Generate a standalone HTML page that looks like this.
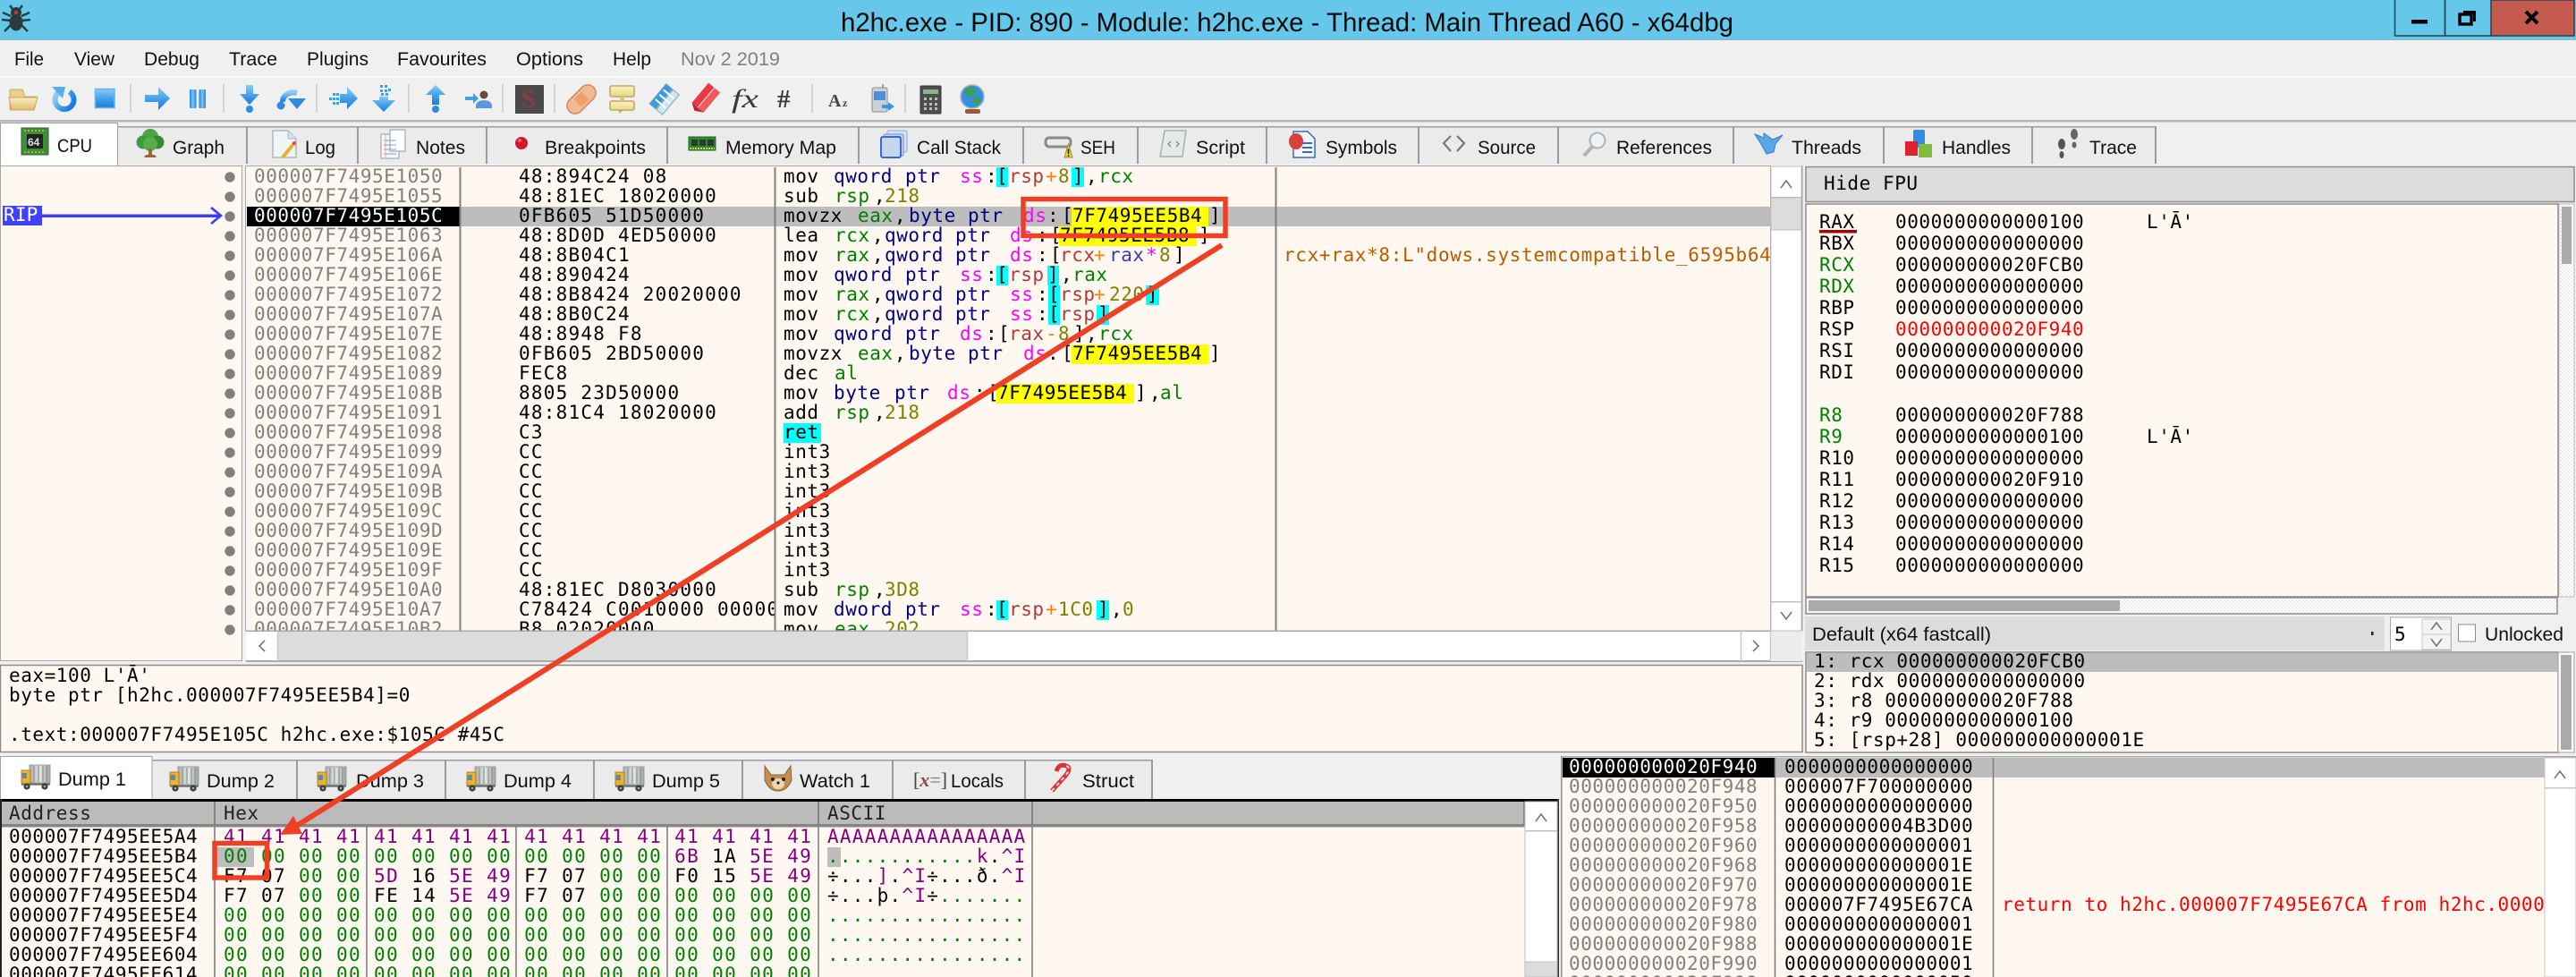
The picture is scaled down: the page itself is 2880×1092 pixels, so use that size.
<!DOCTYPE html>
<html><head><meta charset="utf-8"><title>h2hc.exe - x64dbg</title>
<style>
html,body{margin:0;padding:0;width:2880px;height:1092px;overflow:hidden;background:#f0f0f0}
svg{display:block}
text{white-space:pre}
.s{font-family:"Liberation Sans",sans-serif;font-size:21.5px;fill:#111}
.m{font-family:"DejaVu Sans Mono","Liberation Mono",monospace;font-size:21px;letter-spacing:.56px;fill:#000}
.d{letter-spacing:1.23px}.h{letter-spacing:1.36px}.c{letter-spacing:.9px}
.g{fill:#808080}.w{fill:#fff}.b{fill:#000080}.p{fill:#ff00ff}.r{fill:#008000}.o{fill:#808000}
.q{fill:#ad3b3b}.a{fill:#ff8000}.u{fill:#3b3bad}.v{fill:#800080}.k{fill:#000}.e{fill:#ff0000}.n{fill:#b85c00}
</style></head><body>
<svg xmlns="http://www.w3.org/2000/svg" width="2880" height="1092" viewBox="0 0 2880 1092">
<defs>
<linearGradient id="bl" x1="0" y1="0" x2="0" y2="1"><stop offset="0" stop-color="#8ccbf5"/><stop offset=".55" stop-color="#3f9fe8"/><stop offset="1" stop-color="#1f7bd6"/></linearGradient>
<linearGradient id="blh" x1="0" y1="0" x2="1" y2="0"><stop offset="0" stop-color="#2585de"/><stop offset=".5" stop-color="#7cc4f4"/><stop offset="1" stop-color="#2585de"/></linearGradient>
<linearGradient id="fo" x1="0" y1="0" x2="0" y2="1"><stop offset="0" stop-color="#f9ecbf"/><stop offset="1" stop-color="#dcbc72"/></linearGradient>
<linearGradient id="ye" x1="0" y1="0" x2="0" y2="1"><stop offset="0" stop-color="#faf3c4"/><stop offset="1" stop-color="#e8d984"/></linearGradient>
<linearGradient id="gy" x1="0" y1="0" x2="1" y2="0"><stop offset="0" stop-color="#a9adab"/><stop offset=".5" stop-color="#e2e5e3"/><stop offset="1" stop-color="#9da19f"/></linearGradient>
<g id="truck"><rect x="9" y="0" width="23" height="20" fill="url(#gy)" stroke="#9a9d9b"/><path d="M14 1v18M19 1v18M24 1v18M28 1v18" stroke="#8f938f" stroke-width="1.2"/><rect x="0" y="6" width="10" height="15" fill="#eab22e" stroke="#b08416"/><rect x="0.8" y="9" width="5" height="6" fill="#5f86b0"/><rect x="0" y="20.5" width="32" height="2.2" fill="#6e6e6e"/><circle cx="6" cy="24" r="3.6" fill="#3c3c3c"/><circle cx="6" cy="24" r="1.3" fill="#aaa"/><circle cx="26" cy="24" r="3.6" fill="#3c3c3c"/><circle cx="26" cy="24" r="1.3" fill="#aaa"/></g>
<path id="chev" d="M-6 4L0 -4L6 4" fill="none" stroke="#777" stroke-width="1.6"/>
<path id="chevd" d="M-6 -4L0 4L6 -4" fill="none" stroke="#777" stroke-width="1.6"/>
<pattern id="chk" width="4" height="4" patternUnits="userSpaceOnUse"><rect width="4" height="4" fill="#fff"/><rect width="2" height="2" fill="#ececec"/><rect x="2" y="2" width="2" height="2" fill="#ececec"/></pattern>
</defs>

<!-- chrome -->
<rect width="2880" height="1092" fill="#f0f0f0"/>
<rect width="2880" height="44" fill="#65c8ea"/>
<rect y="44" width="2880" height="1" fill="#9cb4be"/>
<rect y="85" width="2880" height="1.5" fill="#fff"/>
<rect y="134" width="2880" height="2.5" fill="#b4b4b4"/>

<!-- spider logo -->
<g fill="#2b3a3f" stroke="#2b3a3f">
<ellipse cx="18" cy="25" rx="7" ry="9"/><ellipse cx="18" cy="14" rx="5.5" ry="5.5"/>
<path d="M12 18L3 14M12 23L2 22M12 28L5 35M24 18L33 14M24 23L34 22M24 28L31 35M14 10L11 6M22 10L25 6" fill="none" stroke-width="2.4"/>
</g><circle cx="18" cy="14" r="2.2" fill="#c0392b"/>

<text x="940" y="35" font-family="Liberation Sans,sans-serif" font-size="29.5" fill="#0a0a0a" textLength="998" lengthAdjust="spacingAndGlyphs">h2hc.exe - PID: 890 - Module: h2hc.exe - Thread: Main Thread A60 - x64dbg</text>

<!-- window buttons -->
<rect x="2677.5" y="-2" width="56" height="42" fill="none" stroke="#23424f" stroke-width="1.5"/>
<rect x="2733.5" y="-2" width="52" height="42" fill="none" stroke="#23424f" stroke-width="1.5"/>
<rect x="2785" y="0" width="93" height="40" fill="#c45a50" stroke="#23424f" stroke-width="1.5"/>
<rect x="2696" y="22" width="18" height="4.5" fill="#000"/>
<path d="M2754 12h14v12h-3v-9h-11z" fill="#000"/><rect x="2750" y="16" width="13" height="11" fill="none" stroke="#000" stroke-width="3.4"/>
<path d="M2824 13L2837 26M2837 13L2824 26" stroke="#000" stroke-width="4" fill="none"/>

<!-- menu -->
<text class="s" x="16" y="73" textLength="33" lengthAdjust="spacingAndGlyphs">File</text>
<text class="s" x="83" y="73" textLength="45" lengthAdjust="spacingAndGlyphs">View</text>
<text class="s" x="161" y="73" textLength="62" lengthAdjust="spacingAndGlyphs">Debug</text>
<text class="s" x="256" y="73" textLength="54" lengthAdjust="spacingAndGlyphs">Trace</text>
<text class="s" x="343" y="73" textLength="69" lengthAdjust="spacingAndGlyphs">Plugins</text>
<text class="s" x="444" y="73" textLength="100" lengthAdjust="spacingAndGlyphs">Favourites</text>
<text class="s" x="577" y="73" textLength="75" lengthAdjust="spacingAndGlyphs">Options</text>
<text class="s" x="685" y="73" textLength="43" lengthAdjust="spacingAndGlyphs">Help</text>
<text class="s" x="761" y="73" textLength="111" lengthAdjust="spacingAndGlyphs" style="fill:#808080">Nov 2 2019</text>

<!-- toolbar -->
<path d="M146 94v32M250 94v32M354 94v32M457 94v32M562 94v32M620 94v32M908 94v32M1012 94v32" stroke="#c8c8c8" stroke-width="1.5"/>
<!-- folder -->
<path d="M11 105V122Q11 123 13 123H37L41 108H28L25 100H13Q11 100 11 102Z" fill="#e9cf8e" stroke="#c9a659" stroke-width="1"/>
<path d="M10 109H42L38 123H13Z" fill="url(#fo)" stroke="#c9a659" stroke-width="1"/>
<!-- refresh -->
<circle cx="72" cy="111.5" r="10.5" fill="none" stroke="url(#bl)" stroke-width="6" stroke-dasharray="52 14" transform="rotate(-58 72 111.5)"/><path d="M58 97H73L70 110Z" fill="#58aeea"/>
<!-- stop -->
<rect x="106.5" y="99.5" width="21.5" height="21" fill="url(#bl)" stroke="#66b4ec" stroke-width="1.5"/>
<!-- run -->
<path d="M162 106H177V97L190 110L177 123V114H162Z" fill="url(#bl)"/>
<!-- pause -->
<rect x="212" y="100" width="7.5" height="21" rx="1" fill="url(#blh)"/><rect x="222.5" y="100" width="7.5" height="21" rx="1" fill="url(#blh)"/>
<!-- step in -->
<path d="M275 95H283V105H290L279 117L268 105H275Z" fill="url(#bl)"/><circle cx="279" cy="122" r="4" fill="#2f8be0"/>
<!-- step over -->
<path d="M316 114A12 10 0 0 1 332 104" fill="none" stroke="url(#bl)" stroke-width="6"/><path d="M322 110H342L332 122Z" fill="#2f8be0"/><circle cx="314" cy="118" r="4.5" fill="#2f8be0"/>
<!-- animate into -->
<path d="M380 105H388V97L400 110L388 122V115H380Z" fill="url(#bl)"/><path d="M368 109h3v3h-3zM372 104h3v3h-3zM372 109h3v3h-3zM372 114h3v3h-3zM376 104h3v3h-3zM376 109h3v3h-3zM376 114h3v3h-3z" fill="#3f9fe8"/>
<!-- animate over -->
<path d="M424 108H434V112H442L429 125L416 112H424Z" fill="url(#bl)"/><path d="M425 95h3v3h-3zM430 95h3v3h-3zM425 100h3v3h-3zM430 100h3v3h-3zM434 99h3v3h-3zM426 104h3v3h-3zM431 104h3v3h-3z" fill="#3f9fe8"/>
<!-- run to user -->
<path d="M483 117H491V106H498L487 95L476 106H483Z" fill="url(#bl)"/><circle cx="487" cy="122" r="4" fill="#2f8be0"/>
<path d="M520 108H529V104L535 110L529 116V112H520Z" fill="#3f9fe8"/><circle cx="541" cy="106" r="4.5" fill="#6a4a36"/><path d="M532 121V117Q534 112 541 112Q548 112 550 117V121Z" fill="#5a98d8"/>
<!-- S -->
<rect x="576" y="95" width="32" height="32" fill="#4a4a4a"/><text x="583" y="120" font-family="Liberation Serif,serif" font-weight="700" font-size="28" fill="#8e3a44">S</text>
<!-- bandaid -->
<g transform="rotate(45 650 111)"><rect x="641" y="92" width="18" height="38" rx="9" fill="#f2ba92" stroke="#c98a60" stroke-width="1.5"/><rect x="644" y="105" width="12" height="12" fill="#eda26e"/></g>
<!-- comment -->
<rect x="682" y="96" width="27" height="12" rx="2" fill="url(#ye)" stroke="#c4a45c" stroke-width="1.5"/><rect x="682" y="113" width="27" height="10" rx="2" fill="url(#ye)" stroke="#c4a45c" stroke-width="1.5"/><rect x="693" y="108" width="5" height="5" fill="#dcc880"/><path d="M692 123v4l5-4z" fill="#c4a45c"/>
<!-- labels -->
<g transform="rotate(40 742 111)"><rect x="733" y="96" width="9" height="29" fill="#3a9ae4" stroke="#7fa6bc"/><rect x="743" y="96" width="9" height="29" fill="#cfe6f5" stroke="#7fa6bc"/><path d="M735 103h15M735 110h15M735 117h15" stroke="#fff" stroke-width="2"/></g>
<!-- bookmarks -->
<g transform="rotate(40 788 110)"><rect x="780" y="94" width="8" height="29" fill="#e93a44"/><rect x="789" y="94" width="8" height="29" fill="#f25a60"/><path d="M780 123l8 5 9-5z" fill="#c0262f"/></g>
<text x="818" y="120" font-family="Liberation Serif,serif" font-style="italic" font-size="30" fill="#3a3a3a" textLength="30" lengthAdjust="spacingAndGlyphs">fx</text>
<text x="869" y="120" font-family="Liberation Serif,serif" font-weight="700" font-size="29" fill="#3a3a3a">#</text>
<text x="926" y="119" font-family="Liberation Serif,serif" font-weight="700" font-size="20" fill="#444">A</text><text x="942" y="119" font-family="Liberation Serif,serif" font-weight="700" font-size="12" fill="#444">z</text>
<!-- phone -->
<rect x="975" y="98" width="17" height="27" rx="2" fill="#ccd1d4" stroke="#8a8f92"/><path d="M987 98v-4" stroke="#888" stroke-width="1.5"/><rect x="977" y="102" width="13" height="10" fill="#4a8fd8"/><path d="M986 117h7v-3l7 5-7 5v-3h-7z" fill="#3a92e2"/>
<!-- calc -->
<rect x="1029" y="96" width="23" height="31" rx="1" fill="#4d4f4d" stroke="#333"/><rect x="1032" y="100" width="17" height="5" fill="#8fb08f"/><path d="M1033 109h3v3h-3zM1039 109h3v3h-3zM1045 109h3v3h-3zM1033 115h3v3h-3zM1039 115h3v3h-3zM1045 115h3v3h-3zM1033 120h3v3h-3zM1039 120h3v3h-3zM1045 120h3v3h-3z" fill="#bbb"/>
<!-- globe -->
<circle cx="1087" cy="108" r="13" fill="#3a8fdc" stroke="#9fb7c6" stroke-width="1.5"/><path d="M1080 99l7-2 4 5-3 5-6 1-3-4zM1088 110l7-1 1 5-5 5-2-3z" fill="#3ea04a"/><rect x="1079" y="122" width="17" height="5" rx="2" fill="#9a5a3a"/>

<!-- upper tabs -->
<rect x="132" y="141" width="2278" height="42" fill="#ebebeb"/>
<rect x="132" y="141" width="2278" height="1.6" fill="#a0a0a8"/>
<path d="M276 141v42M400 141v42M544 141v42M746 141v42M960 141v42M1144 141v42M1272 141v42M1416 141v42M1586 141v42M1742 141v42M1938 141v42M2106 141v42M2272 141v42M2410 141v42" stroke="#9a9aa2" stroke-width="2"/>
<rect x="0.5" y="137.5" width="131" height="50" fill="#fff" stroke="#a0a0a8"/>
<text class="s" x="64" y="170" textLength="39" lengthAdjust="spacingAndGlyphs">CPU</text>
<text class="s" x="193" y="172" textLength="58" lengthAdjust="spacingAndGlyphs">Graph</text>
<text class="s" x="341" y="172" textLength="34" lengthAdjust="spacingAndGlyphs">Log</text>
<text class="s" x="465" y="172" textLength="55" lengthAdjust="spacingAndGlyphs">Notes</text>
<text class="s" x="609" y="172" textLength="113" lengthAdjust="spacingAndGlyphs">Breakpoints</text>
<text class="s" x="811" y="172" textLength="124" lengthAdjust="spacingAndGlyphs">Memory Map</text>
<text class="s" x="1025" y="172" textLength="94" lengthAdjust="spacingAndGlyphs">Call Stack</text>
<text class="s" x="1208" y="172" textLength="39" lengthAdjust="spacingAndGlyphs">SEH</text>
<text class="s" x="1337" y="172" textLength="55" lengthAdjust="spacingAndGlyphs">Script</text>
<text class="s" x="1482" y="172" textLength="80" lengthAdjust="spacingAndGlyphs">Symbols</text>
<text class="s" x="1652" y="172" textLength="65" lengthAdjust="spacingAndGlyphs">Source</text>
<text class="s" x="1807" y="172" textLength="107" lengthAdjust="spacingAndGlyphs">References</text>
<text class="s" x="2003" y="172" textLength="78" lengthAdjust="spacingAndGlyphs">Threads</text>
<text class="s" x="2171" y="172" textLength="77" lengthAdjust="spacingAndGlyphs">Handles</text>
<text class="s" x="2336" y="172" textLength="53" lengthAdjust="spacingAndGlyphs">Trace</text>
<!-- tab icons -->
<rect x="24" y="143" width="30" height="30" fill="#3f8f3a" stroke="#2c6a2a"/><path d="M27 146h24M27 170h24" stroke="#b8a84a" stroke-width="2" stroke-dasharray="2 2"/><rect x="30" y="150" width="18" height="16" fill="#222"/><text x="31" y="163" font-family="Liberation Sans,sans-serif" font-weight="700" font-size="12" fill="#ddd">64</text>
<circle cx="168" cy="153" r="9" fill="#4aa344"/><circle cx="160" cy="159" r="7.5" fill="#3f9a3c"/><circle cx="176" cy="159" r="7.5" fill="#368a34"/><circle cx="168" cy="161" r="8" fill="#56ae4a"/><path d="M166 166h4v7h3l2 3h-14l2-3h3z" fill="#9a6a3a"/>
<path d="M305 146H322L331 155V176H305Z" fill="#f0f6f6" stroke="#b0b8bc" stroke-width="1.5"/><path d="M322 146V155H331" fill="#dde" stroke="#b0b8bc"/><path d="M316 176L329 160" stroke="#e8b030" stroke-width="4"/><circle cx="329" cy="160" r="2" fill="#d05050"/>
<rect x="426" y="150" width="20" height="27" fill="#f6f8fb" stroke="#b0b8c0" stroke-width="1.5"/><rect x="436" y="145" width="17" height="24" fill="#fff" stroke="#b0b8c0" stroke-width="1.5"/><path d="M429 157h14M429 162h14M429 167h14M429 172h14" stroke="#7aa0d0"/><path d="M431 150v26" stroke="#e8a0a0"/>
<ellipse cx="583" cy="160" rx="7" ry="7" fill="#d01a2c"/><circle cx="581" cy="157" r="2" fill="#f06070"/>
<rect x="770" y="153" width="30" height="15" fill="#2f8a2f" stroke="#1f6a1f"/><rect x="773" y="156" width="7" height="7" fill="#2c3a2c"/><rect x="782" y="156" width="7" height="7" fill="#2c3a2c"/><rect x="791" y="156" width="7" height="7" fill="#2c3a2c"/><path d="M771 166h28" stroke="#d8c860" stroke-width="2" stroke-dasharray="2 1"/>
<rect x="992" y="146" width="22" height="24" rx="2" fill="#d4e2f4" stroke="#a6bcdc" stroke-width="1.5"/><rect x="988" y="150" width="22" height="24" rx="2" fill="#c4d8f0" stroke="#8ea8cc" stroke-width="1.5"/><rect x="985" y="153" width="22" height="23" rx="2" fill="#c6d6ea" stroke="#3a68d0" stroke-width="2"/>
<rect x="1169" y="154" width="28" height="10" rx="4" fill="none" stroke="#8a8a8a" stroke-width="3"/><path d="M1190 176L1199 176L1194.5 161Z" fill="#f0d030" stroke="#a09020"/><text x="1192.5" y="175" font-family="Liberation Sans,sans-serif" font-weight="700" font-size="12" fill="#222">!</text>
<path d="M1302 146H1326L1322 175H1297Z" fill="#e6eae6" stroke="#a8b0a8" stroke-width="1.5"/><path d="M1309 158l-3 3 3 3M1315 158l3 3-3 3" stroke="#667" fill="none"/>
<path d="M1446 147H1462L1470 155V176H1446Z" fill="#f2f5fa" stroke="#3a68c4" stroke-width="1.5"/><path d="M1456 160h11M1456 165h11M1456 170h11" stroke="#3a68c4" stroke-width="2"/><ellipse cx="1449" cy="158" rx="8" ry="9" fill="#d8423a"/>
<path d="M1622 152L1614 160L1622 169M1629 152L1637 160L1629 169" fill="none" stroke="#777" stroke-width="2.2"/>
<circle cx="1786" cy="157" r="8.5" fill="#eef2f4" stroke="#b0b4b8" stroke-width="2"/><path d="M1780 164L1771 174" stroke="#b0b4b8" stroke-width="4"/>
<path d="M1962 150l10 4v-5l10 7 11-5-8 10-2 9-8 2-5-9z" fill="#5aa6e6" stroke="#3a80c0"/>
<rect x="2139" y="145" width="13" height="20" rx="2" fill="#2e8fde"/><rect x="2130" y="158" width="14" height="16" fill="#e0202c"/><rect x="2145" y="161" width="15" height="15" fill="#82bc38"/>
<ellipse cx="2305" cy="161" rx="4" ry="6" fill="#555"/><ellipse cx="2305" cy="173" rx="2.5" ry="4" fill="#555"/><ellipse cx="2319" cy="150" rx="4" ry="6" fill="#666"/><ellipse cx="2319" cy="162" rx="2.5" ry="3.5" fill="#666"/>

<!-- disassembly frame -->
<rect x="0.5" y="185.5" width="270" height="553" fill="#fff8f0" stroke="#a8a8a8"/>
<rect x="274.5" y="185.5" width="1705" height="519.5" fill="#fff8f0" stroke="#a8a8a8"/>
<!-- gutter dots -->
<g fill="#808080">
<circle cx="257" cy="198" r="5.7"/><circle cx="257" cy="220" r="5.7"/><circle cx="257" cy="242" r="5.7"/><circle cx="257" cy="264" r="5.7"/><circle cx="257" cy="286" r="5.7"/><circle cx="257" cy="308" r="5.7"/><circle cx="257" cy="330" r="5.7"/><circle cx="257" cy="352" r="5.7"/><circle cx="257" cy="374" r="5.7"/><circle cx="257" cy="396" r="5.7"/><circle cx="257" cy="418" r="5.7"/><circle cx="257" cy="440" r="5.7"/><circle cx="257" cy="462" r="5.7"/><circle cx="257" cy="484" r="5.7"/><circle cx="257" cy="506" r="5.7"/><circle cx="257" cy="528" r="5.7"/><circle cx="257" cy="550" r="5.7"/><circle cx="257" cy="572" r="5.7"/><circle cx="257" cy="594" r="5.7"/><circle cx="257" cy="616" r="5.7"/><circle cx="257" cy="638" r="5.7"/><circle cx="257" cy="660" r="5.7"/><circle cx="257" cy="682" r="5.7"/><circle cx="257" cy="704" r="5.7"/>
</g>
<rect x="3" y="230" width="44" height="22" fill="#4040ff"/>
<text class="m w" x="4" y="247" style="letter-spacing:.2px;fill:#fff">RIP</text>
<rect x="47" y="239.5" width="198" height="3.5" fill="#3c3cff"/>
<path d="M236 232L247 241L236 250" fill="none" stroke="#3c3cff" stroke-width="2.6"/>

<!-- selected row -->
<rect x="276" y="231" width="1704" height="22" fill="#bdbdbd"/>
<rect x="276" y="231" width="238" height="22" fill="#000"/>
<!-- backgrounds -->
<g fill="#00ffff">
<rect x="1114" y="187" width="13" height="22"/><rect x="1198" y="187" width="14" height="22"/>
<rect x="1114" y="297" width="13" height="22"/><rect x="1171" y="297" width="13" height="22"/>
<rect x="1172" y="319" width="13" height="22"/><rect x="1281" y="319" width="15" height="22"/>
<rect x="1172" y="341" width="13" height="22"/><rect x="1226" y="341" width="14" height="22"/>
<rect x="876" y="473" width="42" height="22"/>
<rect x="1114" y="671" width="13" height="22"/><rect x="1226" y="671" width="14" height="22"/>
</g>
<g fill="#ffff00">
<rect x="1198" y="231" width="153" height="22"/><rect x="1184" y="253" width="154" height="22"/>
<rect x="1198" y="385" width="153" height="22"/><rect x="1114" y="429" width="154" height="22"/>
</g>
<!-- addresses -->
<text class="m g" x="284" y="204">000007F7495E1050</text><text class="m g" x="284" y="226">000007F7495E1055</text>
<text class="m w" x="284" y="248" style="fill:#fff">000007F7495E105C</text>
<text class="m g" x="284" y="270">000007F7495E1063</text><text class="m g" x="284" y="292">000007F7495E106A</text><text class="m g" x="284" y="314">000007F7495E106E</text><text class="m g" x="284" y="336">000007F7495E1072</text><text class="m g" x="284" y="358">000007F7495E107A</text><text class="m g" x="284" y="380">000007F7495E107E</text><text class="m g" x="284" y="402">000007F7495E1082</text><text class="m g" x="284" y="424">000007F7495E1089</text><text class="m g" x="284" y="446">000007F7495E108B</text><text class="m g" x="284" y="468">000007F7495E1091</text><text class="m g" x="284" y="490">000007F7495E1098</text><text class="m g" x="284" y="512">000007F7495E1099</text><text class="m g" x="284" y="534">000007F7495E109A</text><text class="m g" x="284" y="556">000007F7495E109B</text><text class="m g" x="284" y="578">000007F7495E109C</text><text class="m g" x="284" y="600">000007F7495E109D</text><text class="m g" x="284" y="622">000007F7495E109E</text><text class="m g" x="284" y="644">000007F7495E109F</text><text class="m g" x="284" y="666">000007F7495E10A0</text><text class="m g" x="284" y="688">000007F7495E10A7</text><text class="m g" x="284" y="710">000007F7495E10B2</text>
<!-- bytes -->
<text class="m d" x="580" y="204">48:894C24 08</text><text class="m d" x="580" y="226">48:81EC 18020000</text><text class="m d" x="580" y="248">0FB605 51D50000</text><text class="m d" x="580" y="270">48:8D0D 4ED50000</text><text class="m d" x="580" y="292">48:8B04C1</text><text class="m d" x="580" y="314">48:890424</text><text class="m d" x="580" y="336">48:8B8424 20020000</text><text class="m d" x="580" y="358">48:8B0C24</text><text class="m d" x="580" y="380">48:8948 F8</text><text class="m d" x="580" y="402">0FB605 2BD50000</text><text class="m d" x="580" y="424">FEC8</text><text class="m d" x="580" y="446">8805 23D50000</text><text class="m d" x="580" y="468">48:81C4 18020000</text><text class="m d" x="580" y="490">C3</text><text class="m d" x="580" y="512">CC</text><text class="m d" x="580" y="534">CC</text><text class="m d" x="580" y="556">CC</text><text class="m d" x="580" y="578">CC</text><text class="m d" x="580" y="600">CC</text><text class="m d" x="580" y="622">CC</text><text class="m d" x="580" y="644">CC</text><text class="m d" x="580" y="666">48:81EC D8030000</text><text class="m d" x="580" y="688">C78424 C0010000 00000000</text><text class="m d" x="580" y="710">B8 02020000</text>
<!-- clip bytes overflow -->
<rect x="866" y="671" width="70" height="22" fill="#fff8f0"/>
<path d="M514.5 187V705M866.5 187V705M1426.5 187V705" stroke="#808080" stroke-width="2"/>
<!-- mnemonics -->
<text class="m" x="876" y="204">mov<tspan class="b" x="932">qword</tspan><tspan class="b" x="1012">ptr</tspan><tspan class="p" x="1073">ss</tspan><tspan x="1102">:</tspan><tspan x="1114">[</tspan><tspan class="q" x="1128">rsp</tspan><tspan class="a" x="1169">+</tspan><tspan class="o" x="1183">8</tspan><tspan x="1199">]</tspan><tspan x="1214">,</tspan><tspan class="r" x="1228">rcx</tspan></text>
<text class="m" x="876" y="226">sub<tspan class="r" x="933">rsp</tspan><tspan x="977">,</tspan><tspan class="o" x="989">218</tspan></text>
<text class="m" x="876" y="248">movzx<tspan class="r" x="959">eax</tspan><tspan x="1000">,</tspan><tspan class="b" x="1016">byte</tspan><tspan class="b" x="1082">ptr</tspan><tspan class="p" x="1144">ds</tspan><tspan x="1171">:</tspan><tspan x="1187">[</tspan><tspan x="1199">7F7495EE5B4</tspan><tspan x="1352">]</tspan></text>
<text class="m" x="876" y="270">lea<tspan class="r" x="933">rcx</tspan><tspan x="975">,</tspan><tspan class="b" x="989">qword</tspan><tspan class="b" x="1068">ptr</tspan><tspan class="p" x="1129">ds</tspan><tspan x="1159">:</tspan><tspan x="1174">[</tspan><tspan x="1185">7F7495EE5B8</tspan><tspan x="1340">]</tspan></text>
<text class="m" x="876" y="292">mov<tspan class="r" x="933">rax</tspan><tspan x="975">,</tspan><tspan class="b" x="989">qword</tspan><tspan class="b" x="1068">ptr</tspan><tspan class="p" x="1129">ds</tspan><tspan x="1159">:</tspan><tspan x="1174">[</tspan><tspan class="q" x="1185">rcx</tspan><tspan class="a" x="1223">+</tspan><tspan class="u" x="1240">rax</tspan><tspan class="p" x="1281">*</tspan><tspan class="o" x="1296">8</tspan><tspan x="1312">]</tspan></text>
<text class="m" x="876" y="314">mov<tspan class="b" x="932">qword</tspan><tspan class="b" x="1012">ptr</tspan><tspan class="p" x="1073">ss</tspan><tspan x="1102">:</tspan><tspan x="1114">[</tspan><tspan class="q" x="1128">rsp</tspan><tspan x="1171">]</tspan><tspan x="1186">,</tspan><tspan class="r" x="1199">rax</tspan></text>
<text class="m" x="876" y="336">mov<tspan class="r" x="933">rax</tspan><tspan x="975">,</tspan><tspan class="b" x="989">qword</tspan><tspan class="b" x="1068">ptr</tspan><tspan class="p" x="1129">ss</tspan><tspan x="1159">:</tspan><tspan x="1172">[</tspan><tspan class="q" x="1185">rsp</tspan><tspan class="a" x="1223">+</tspan><tspan class="o" x="1240">220</tspan><tspan x="1282">]</tspan></text>
<text class="m" x="876" y="358">mov<tspan class="r" x="933">rcx</tspan><tspan x="975">,</tspan><tspan class="b" x="989">qword</tspan><tspan class="b" x="1068">ptr</tspan><tspan class="p" x="1129">ss</tspan><tspan x="1159">:</tspan><tspan x="1172">[</tspan><tspan class="q" x="1185">rsp</tspan><tspan x="1227">]</tspan></text>
<text class="m" x="876" y="380">mov<tspan class="b" x="932">qword</tspan><tspan class="b" x="1012">ptr</tspan><tspan class="p" x="1073">ds</tspan><tspan x="1102">:</tspan><tspan x="1116">[</tspan><tspan class="q" x="1128">rax</tspan><tspan class="a" x="1169">-</tspan><tspan class="o" x="1183">8</tspan><tspan x="1200">]</tspan><tspan x="1214">,</tspan><tspan class="r" x="1228">rcx</tspan></text>
<text class="m" x="876" y="402">movzx<tspan class="r" x="959">eax</tspan><tspan x="1000">,</tspan><tspan class="b" x="1016">byte</tspan><tspan class="b" x="1082">ptr</tspan><tspan class="p" x="1144">ds</tspan><tspan x="1171">:</tspan><tspan x="1187">[</tspan><tspan x="1199">7F7495EE5B4</tspan><tspan x="1352">]</tspan></text>
<text class="m" x="876" y="424">dec<tspan class="r" x="933">al</tspan></text>
<text class="m" x="876" y="446">mov<tspan class="b" x="932">byte</tspan><tspan class="b" x="1000">ptr</tspan><tspan class="p" x="1059">ds</tspan><tspan x="1089">:</tspan><tspan x="1104">[</tspan><tspan x="1115">7F7495EE5B4</tspan><tspan x="1269">]</tspan><tspan x="1285">,</tspan><tspan class="r" x="1297">al</tspan></text>
<text class="m" x="876" y="468">add<tspan class="r" x="933">rsp</tspan><tspan x="977">,</tspan><tspan class="o" x="989">218</tspan></text>
<text class="m" x="876" y="490">ret</text>
<text class="m" x="876" y="512">int3</text><text class="m" x="876" y="534">int3</text><text class="m" x="876" y="556">int3</text><text class="m" x="876" y="578">int3</text><text class="m" x="876" y="600">int3</text><text class="m" x="876" y="622">int3</text><text class="m" x="876" y="644">int3</text>
<text class="m" x="876" y="666">sub<tspan class="r" x="933">rsp</tspan><tspan x="977">,</tspan><tspan class="o" x="989">3D8</tspan></text>
<text class="m" x="876" y="688">mov<tspan class="b" x="932">dword</tspan><tspan class="b" x="1012">ptr</tspan><tspan class="p" x="1073">ss</tspan><tspan x="1102">:</tspan><tspan x="1114">[</tspan><tspan class="q" x="1128">rsp</tspan><tspan class="a" x="1169">+</tspan><tspan class="o" x="1183">1C0</tspan><tspan x="1227">]</tspan><tspan x="1242">,</tspan><tspan class="o" x="1255">0</tspan></text>
<text class="m" x="876" y="710">mov<tspan class="r" x="933">eax</tspan><tspan x="977">,</tspan><tspan class="o" x="989">202</tspan></text>
<text class="m n" x="1435" y="292" style="letter-spacing:.66px">rcx+rax*8:L"dows.systemcompatible_6595b64:</text>

<!-- disasm h scroll -->
<rect x="275" y="705" width="1705" height="34" fill="#fff"/>
<rect x="310" y="705" width="771" height="34" fill="#dcdcdc"/>
<rect x="275" y="704.5" width="1705" height="1.5" fill="#a8a8a8"/>
<rect x="275" y="738" width="1740" height="2" fill="#a8a8a8"/>
<path d="M310.5 705V739M1081.5 705V739M1946.5 705V739M1979.5 705V739" stroke="#c8c8c8" stroke-width="1.5"/>
<path d="M296 716L290 722L296 728" fill="none" stroke="#777" stroke-width="1.6"/>
<path d="M1960 716L1966 722L1960 728" fill="none" stroke="#777" stroke-width="1.6"/>
<rect x="1980" y="705" width="34" height="34" fill="#ececec"/>
<!-- disasm v scroll -->
<rect x="1980" y="186" width="34" height="519" fill="#fff" stroke="#c0c0c0"/>
<rect x="1980" y="221" width="34" height="36" fill="#dcdcdc" stroke="#c0c0c0"/>
<rect x="1980" y="220" width="34" height="1" fill="#bbb"/>
<use href="#chev" x="1997" y="206"/>
<rect x="1980" y="672" width="34" height="1.5" fill="#c0c0c0"/>
<use href="#chevd" x="1997" y="688"/>
<rect x="2014" y="185" width="1.5" height="520" fill="#a8a8a8"/>

<!-- right register pane -->
<rect x="2019" y="186.5" width="859" height="39" fill="#dcdcdc" stroke="#8c8c8c" stroke-width="1.5"/>
<text class="m" x="2039" y="212">Hide FPU</text>
<rect x="2019" y="228" width="841" height="439" fill="#fff8f0" stroke="#8c8c8c" stroke-width="1.5"/>
<rect x="2861" y="228" width="17" height="439" fill="url(#chk)" stroke="#bdbdbd"/>
<rect x="2864" y="231" width="11" height="64" fill="#aaa"/>
<text class="m" x="2034" y="255">RAX<tspan x="2119">0000000000000100</tspan><tspan x="2400">L'Ā'</tspan></text>
<text class="m" x="2034" y="279">RBX<tspan x="2119">0000000000000000</tspan></text>
<text class="m" x="2034" y="303"><tspan class="r">RCX</tspan><tspan x="2119">000000000020FCB0</tspan></text>
<text class="m" x="2034" y="327"><tspan class="r">RDX</tspan><tspan x="2119">0000000000000000</tspan></text>
<text class="m" x="2034" y="351">RBP<tspan x="2119">0000000000000000</tspan></text>
<text class="m" x="2034" y="375">RSP<tspan class="e" x="2119">000000000020F940</tspan></text>
<text class="m" x="2034" y="399">RSI<tspan x="2119">0000000000000000</tspan></text>
<text class="m" x="2034" y="423">RDI<tspan x="2119">0000000000000000</tspan></text>
<text class="m" x="2034" y="471"><tspan class="r">R8</tspan><tspan x="2119">000000000020F788</tspan></text>
<text class="m" x="2034" y="495"><tspan class="r">R9</tspan><tspan x="2119">0000000000000100</tspan><tspan x="2400">L'Ā'</tspan></text>
<text class="m" x="2034" y="519">R10<tspan x="2119">0000000000000000</tspan></text>
<text class="m" x="2034" y="543">R11<tspan x="2119">000000000020F910</tspan></text>
<text class="m" x="2034" y="567">R12<tspan x="2119">0000000000000000</tspan></text>
<text class="m" x="2034" y="591">R13<tspan x="2119">0000000000000000</tspan></text>
<text class="m" x="2034" y="615">R14<tspan x="2119">0000000000000000</tspan></text>
<text class="m" x="2034" y="639">R15<tspan x="2119">0000000000000000</tspan></text>
<rect x="2034" y="257" width="42" height="3.5" fill="#a80000"/>
<!-- reg h scroll -->
<rect x="2019" y="668" width="840" height="18" fill="url(#chk)" stroke="#8c8c8c" stroke-width="1.5"/>
<rect x="2022" y="671" width="348" height="12" fill="#aaa"/>
<!-- default bar -->
<rect x="2018" y="689" width="648" height="38" fill="#dcdcdc"/>
<text class="s" x="2026" y="716" textLength="200" lengthAdjust="spacingAndGlyphs">Default (x64 fastcall)</text>
<rect x="2651" y="706" width="2.5" height="4" fill="#222"/>
<rect x="2672.5" y="690" width="68" height="37" fill="#fff" stroke="#a8a8a8"/>
<text class="m" x="2677" y="716">5</text>
<rect x="2708" y="692" width="32" height="17" fill="#f4f4f4" stroke="#c8c8c8"/><rect x="2708" y="709" width="32" height="17" fill="#f4f4f4" stroke="#c8c8c8"/>
<use href="#chev" x="2724" y="700"/><use href="#chevd" x="2724" y="718"/>
<rect x="2748.5" y="698" width="19" height="19" fill="#fff" stroke="#8c8c8c"/>
<text class="s" x="2778" y="716" textLength="88" lengthAdjust="spacingAndGlyphs">Unlocked</text>

<!-- call args -->
<rect x="2019" y="729" width="841" height="112" fill="#fff8f0" stroke="#8c8c8c" stroke-width="1.5"/>
<rect x="2020" y="729.5" width="840" height="21.5" fill="#bdbdbd"/>
<rect x="2860" y="729" width="18" height="112" fill="#fff" stroke="#9c9c9c"/>
<rect x="2863" y="732" width="12" height="106" fill="#aaa"/>
<text class="m" x="2028" y="746">1: rcx 000000000020FCB0</text>
<text class="m" x="2028" y="768">2: rdx 0000000000000000</text>
<text class="m" x="2028" y="790">3: r8 000000000020F788</text>
<text class="m" x="2028" y="812">4: r9 0000000000000100</text>
<text class="m" x="2028" y="834">5: [rsp+28] 000000000000001E</text>

<!-- log pane -->
<rect x="0.5" y="743.5" width="2014.5" height="97" fill="#fff8f0" stroke="#8c8c8c" stroke-width="1.5"/>
<text class="m" x="10" y="762">eax=100 L'Ā'</text>
<text class="m" x="10" y="784">byte ptr [h2hc.000007F7495EE5B4]=0</text>
<text class="m" x="10" y="828">.text:000007F7495E105C h2hc.exe:$105C #45C</text>

<!-- bottom tabs -->
<rect x="170" y="849" width="1118" height="44" fill="#ebebeb"/>
<rect x="170" y="849" width="1118" height="1.6" fill="#a0a0a8"/>
<path d="M332 849v44M498 849v44M664 849v44M830 849v44M998 849v44M1146 849v44M1288 849v44" stroke="#9a9aa2" stroke-width="2"/>
<rect x="0.5" y="845.5" width="169.5" height="48" fill="#fff" stroke="#a0a0a8"/>
<use href="#truck" x="24" y="855"/><use href="#truck" x="190" y="857"/><use href="#truck" x="355" y="857"/><use href="#truck" x="522" y="857"/><use href="#truck" x="688" y="857"/>
<text class="s" x="65" y="878" textLength="76" lengthAdjust="spacingAndGlyphs">Dump 1</text>
<text class="s" x="231" y="880" textLength="76" lengthAdjust="spacingAndGlyphs">Dump 2</text>
<text class="s" x="398" y="880" textLength="76" lengthAdjust="spacingAndGlyphs">Dump 3</text>
<text class="s" x="563" y="880" textLength="76" lengthAdjust="spacingAndGlyphs">Dump 4</text>
<text class="s" x="729" y="880" textLength="76" lengthAdjust="spacingAndGlyphs">Dump 5</text>
<text class="s" x="894" y="880" textLength="79" lengthAdjust="spacingAndGlyphs">Watch 1</text>
<text class="s" x="1063" y="880" textLength="59" lengthAdjust="spacingAndGlyphs">Locals</text>
<text class="s" x="1210" y="880" textLength="58" lengthAdjust="spacingAndGlyphs">Struct</text>
<!-- watch icon, locals icon, struct icon -->
<path d="M855 856L862 866H877L884 856L885 872Q880 884 870 884Q860 884 855 872Z" fill="#c48e50" stroke="#8a6238"/><ellipse cx="870" cy="876" rx="7" ry="6" fill="#eed6ae"/><circle cx="864" cy="871" r="2" fill="#222"/><circle cx="876" cy="871" r="2" fill="#222"/><circle cx="870" cy="875" r="1.6" fill="#222"/>
<text x="1021" y="879" font-family="Liberation Serif,serif" font-size="22" fill="#444">[<tspan font-style="italic" font-weight="700" fill="#8a4a4a">x</tspan><tspan fill="#777">=</tspan>]</text>
<path d="M1176 884L1192 866Q1198 858 1192 856Q1184 853 1181 862" fill="none" stroke="#d8343c" stroke-width="5"/><path d="M1176 884L1192 866Q1198 858 1192 856" fill="none" stroke="#f8d8d8" stroke-width="2" stroke-dasharray="4 4"/>

<!-- dump pane -->
<rect x="0" y="893" width="1742" height="3" fill="#000"/>
<rect x="0" y="896" width="1741" height="196" fill="#fff8f0"/>
<rect x="0" y="893" width="2" height="199" fill="#222"/>
<rect x="1741" y="893" width="2" height="199" fill="#333"/>
<rect x="2" y="896" width="1703" height="25" fill="#bbbbbb"/>
<rect x="2" y="921" width="1703" height="3.5" fill="#858585"/>
<path d="M240 896V924M915 896V924M1154 896V924M1704 896V924" stroke="#858585" stroke-width="2"/>
<text class="m" x="10" y="916" style="fill:#222">Address</text>
<text class="m" x="250" y="916" style="fill:#222">Hex</text>
<text class="m" x="925" y="916" style="fill:#222">ASCII</text>
<path d="M240 924V1092M410 924V1092M577 924V1092M746 924V1092M915 924V1092M1154 924V1092" stroke="#808080" stroke-width="1.6"/>
<rect x="242" y="947" width="42" height="22" fill="#bdbdbd"/>
<rect x="925" y="947" width="15" height="22" fill="#bdbdbd"/>
<text class="m" x="10" y="942">000007F7495EE5A4</text><text class="m" x="10" y="964">000007F7495EE5B4</text><text class="m" x="10" y="986">000007F7495EE5C4</text><text class="m" x="10" y="1008">000007F7495EE5D4</text><text class="m" x="10" y="1030">000007F7495EE5E4</text><text class="m" x="10" y="1052">000007F7495EE5F4</text><text class="m" x="10" y="1074">000007F7495EE604</text><text class="m" x="10" y="1096">000007F7495EE614</text>
<text class="m h v" x="250" y="942">41 41 41 41 41 41 41 41 41 41 41 41 41 41 41 41</text>
<text class="m h r" x="250" y="964">00 00 00 00 00 00 00 00 00 00 00 00 <tspan class="v">6B </tspan><tspan class="k">1A </tspan><tspan class="v">5E 49</tspan></text>
<text class="m h" x="250" y="986">F7 07 <tspan class="r">00 00 </tspan><tspan class="v">5D </tspan>16 <tspan class="v">5E 49 </tspan>F7 07 <tspan class="r">00 00 </tspan>F0 15 <tspan class="v">5E 49</tspan></text>
<text class="m h" x="250" y="1008">F7 07 <tspan class="r">00 00 </tspan>FE 14 <tspan class="v">5E 49 </tspan>F7 07 <tspan class="r">00 00 00 00 00 00</tspan></text>
<text class="m h r" x="250" y="1030">00 00 00 00 00 00 00 00 00 00 00 00 00 00 00 00</text>
<text class="m h r" x="250" y="1052">00 00 00 00 00 00 00 00 00 00 00 00 00 00 00 00</text>
<text class="m h r" x="250" y="1074">00 00 00 00 00 00 00 00 00 00 00 00 00 00 00 00</text>
<text class="m h r" x="250" y="1096">00 00 00 00 00 00 00 00 00 00 00 00 00 00 00 00</text>
<text class="m h v" x="925" y="942" style="letter-spacing:1.26px">AAAAAAAAAAAAAAAA</text>
<text class="m r" x="925" y="964" style="letter-spacing:1.26px">............<tspan class="v">k</tspan><tspan class="k">.</tspan><tspan class="v">^I</tspan></text>
<text class="m" x="925" y="986" style="letter-spacing:1.26px">÷...<tspan class="v">]</tspan>.<tspan class="v">^I</tspan>÷...ð.<tspan class="v">^I</tspan></text>
<text class="m" x="925" y="1008" style="letter-spacing:1.26px">÷...þ.<tspan class="v">^I</tspan>÷<tspan class="r">.......</tspan></text>
<text class="m r" x="925" y="1030" style="letter-spacing:1.26px">................</text>
<text class="m r" x="925" y="1052" style="letter-spacing:1.26px">................</text>
<text class="m r" x="925" y="1074" style="letter-spacing:1.26px">................</text>
<rect x="1705" y="896" width="36" height="196" fill="#fff" stroke="#c0c0c0"/>
<rect x="1705" y="928" width="36" height="1.5" fill="#c0c0c0"/>
<use href="#chev" x="1723" y="914"/>
<rect x="1705" y="1075" width="36" height="17" fill="#dcdcdc" stroke="#c0c0c0"/>

<!-- stack pane -->
<rect x="1746" y="845" width="1134" height="247" fill="#fff8f0"/>
<rect x="1746" y="845" width="1134" height="1.5" fill="#a8a8a8"/>
<rect x="1745" y="845" width="1.5" height="247" fill="#8c8c8c"/>
<rect x="1747" y="847" width="1098" height="22" fill="#bdbdbd"/>
<rect x="1747" y="847" width="237" height="22" fill="#000"/>
<path d="M1984.5 847V1092M2228.5 847V1092" stroke="#808080" stroke-width="1.6"/>
<text class="m" x="1754" y="864" style="fill:#fff">000000000020F940</text>
<text class="m g" x="1754" y="886">000000000020F948</text><text class="m g" x="1754" y="908">000000000020F950</text><text class="m g" x="1754" y="930">000000000020F958</text><text class="m g" x="1754" y="952">000000000020F960</text><text class="m g" x="1754" y="974">000000000020F968</text><text class="m g" x="1754" y="996">000000000020F970</text><text class="m g" x="1754" y="1018">000000000020F978</text><text class="m g" x="1754" y="1040">000000000020F980</text><text class="m g" x="1754" y="1062">000000000020F988</text><text class="m g" x="1754" y="1084">000000000020F990</text><text class="m g" x="1754" y="1106">000000000020F998</text>
<text class="m" x="1995" y="864">0000000000000000</text><text class="m" x="1995" y="886">000007F700000000</text><text class="m" x="1995" y="908">0000000000000000</text><text class="m" x="1995" y="930">00000000004B3D00</text><text class="m" x="1995" y="952">0000000000000001</text><text class="m" x="1995" y="974">000000000000001E</text><text class="m" x="1995" y="996">000000000000001E</text><text class="m" x="1995" y="1018">000007F7495E67CA</text><text class="m" x="1995" y="1040">0000000000000001</text><text class="m" x="1995" y="1062">000000000000001E</text><text class="m" x="1995" y="1084">0000000000000001</text><text class="m" x="1995" y="1106">0000000000000050</text>
<text class="m e" x="2238" y="1018">return to h2hc.000007F7495E67CA from h2hc.000007F7495E1050</text>
<rect x="2845" y="847" width="35" height="245" fill="#fff" stroke="#c8c8c8"/>
<rect x="2845" y="880" width="35" height="1.5" fill="#c8c8c8"/>
<use href="#chev" x="2862" y="866"/>

<!-- red annotations -->
<g fill="none" stroke="#ee4027" stroke-width="5.5">
<rect x="1144" y="222.5" width="226" height="41"/>
<rect x="240" y="942.5" width="58.5" height="38.5"/>
</g>
<path d="M1366 274L330 924" stroke="#ee4027" stroke-width="6" fill="none"/>
<path d="M313 933L328 912L338 932Z" fill="#ee4027"/>
</svg>
</body></html>
